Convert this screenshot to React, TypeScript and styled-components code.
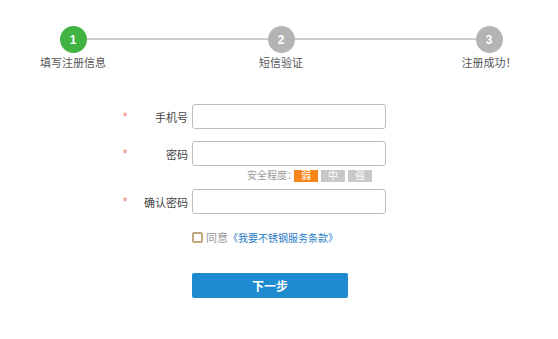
import styled, { createGlobalStyle } from 'styled-components';

const GlobalStyle = createGlobalStyle`
  body {
    margin: 0;
    background: #fff;
    font-family: "Liberation Sans", "Noto Sans CJK SC", sans-serif;
    text-spacing-trim: space-all;
  }
`;

type StepProps = {
  num: number;
  title: string;
  active?: boolean;
};

const steps: StepProps[] = [
  { num: 1, title: '填写注册信息', active: true },
  { num: 2, title: '短信验证' },
  { num: 3, title: '注册成功！' },
];

const fields = [
  { label: '手机号', type: 'text', strength: false },
  { label: '密码', type: 'password', strength: true },
  { label: '确认密码', type: 'password', strength: false },
];

const levels = ['弱', '中', '强'];

const App = () => {
  return (
    <Page>
      <GlobalStyle />
      <Stepper>
        {steps.map(step => (
          <Step key={step.num}>
            <StepCircle active={step.active}>{step.num}</StepCircle>
            <StepTitle>{step.title}</StepTitle>
          </Step>
        ))}
      </Stepper>
      <Form>
        {fields.map(field => (
          <FieldBlock key={field.label}>
            <FieldRow>
              <Required>*</Required>
              <FieldLabel>{field.label}</FieldLabel>
              <FieldInput type={field.type} />
            </FieldRow>
            {field.strength && (
              <StrengthRow>
                <StrengthLabel>安全程度：</StrengthLabel>
                {levels.map((level, i) => (
                  <StrengthBox key={level} on={i === 0}>{level}</StrengthBox>
                ))}
              </StrengthRow>
            )}
          </FieldBlock>
        ))}
        <AgreeRow>
          <CheckBox />
          <AgreeText>同意</AgreeText>
          <AgreeLink>《我要不锈钢服务条款》</AgreeLink>
        </AgreeRow>
        <SubmitRow>
          <NextButton>下一步</NextButton>
        </SubmitRow>
      </Form>
    </Page>
  );
};

export default App;

const Page = styled.div`
  width: 558px;
  height: 339px;
  padding-top: 26px;
  box-sizing: border-box;
`;

const Stepper = styled.div`
  position: relative;
  display: flex;
  justify-content: space-between;
  margin: 0 29px 0 33px;

  &::before {
    content: '';
    position: absolute;
    left: 40px;
    right: 40px;
    top: 12px;
    height: 2px;
    background: #cdcdcd;
  }
`;

const Step = styled.div`
  position: relative;
  display: flex;
  flex-direction: column;
  align-items: center;
  width: 80px;
`;

const StepCircle = styled.div<{ active?: boolean }>`
  width: 27px;
  height: 27px;
  border-radius: 50%;
  background: ${p => (p.active ? '#41b343' : '#b4b4b4')};
  color: #fff;
  font-size: 12px;
  font-weight: 700;
  display: flex;
  align-items: center;
  justify-content: center;
`;

const StepTitle = styled.div`
  margin-top: 2px;
  font-family: "Noto Sans CJK SC", sans-serif;
  font-size: 11px;
  line-height: 14px;
  color: #555;
  white-space: nowrap;
`;

const Form = styled.div`
  margin-top: 35px;
  display: flex;
  flex-direction: column;
`;

const FieldBlock = styled.div`
  display: flex;
  flex-direction: column;
  margin-bottom: 12px;
`;

const FieldRow = styled.div`
  display: flex;
  align-items: center;
  padding-left: 120px;
`;

const Required = styled.span`
  width: 10px;
  color: #ef8080;
  font-size: 12px;
  text-align: center;
`;

const FieldLabel = styled.span`
  width: 58px;
  text-align: right;
  font-size: 11px;
  color: #444;
  margin-right: 4px;
`;

const FieldInput = styled.input`
  width: 194px;
  height: 25px;
  box-sizing: border-box;
  border: 1px solid #bdbdbd;
  border-radius: 3px;
  outline: none;
  padding: 0 6px;
`;

const StrengthRow = styled.div`
  display: flex;
  align-items: center;
  height: 12px;
  padding-left: 247px;
  margin-top: 4px;
  margin-bottom: -5px;
  gap: 3px;
`;

const StrengthLabel = styled.span`
  font-size: 10px;
  line-height: 12px;
  color: #999;
  margin-right: -6px;
`;

const StrengthBox = styled.span<{ on?: boolean }>`
  width: 24px;
  height: 12px;
  line-height: 12px;
  text-align: center;
  font-size: 10px;
  color: #fff;
  background: ${p => (p.on ? '#f7861a' : '#c8c8c8')};
`;

const AgreeRow = styled.div`
  display: flex;
  align-items: center;
  height: 16px;
  padding-left: 192px;
  margin-top: 3px;
`;

const CheckBox = styled.span`
  width: 11px;
  height: 11px;
  box-sizing: border-box;
  border: 2px solid #c1a87c;
  border-radius: 2px;
  margin-right: 3px;
`;

const AgreeText = styled.span`
  font-size: 11px;
  color: #999;
`;

const AgreeLink = styled.a`
  font-size: 10px;
  color: #2a7cc8;
  cursor: pointer;
`;

const SubmitRow = styled.div`
  padding-left: 192px;
  margin-top: 28px;
`;

const NextButton = styled.button`
  width: 156px;
  height: 25px;
  border: none;
  border-radius: 2px;
  background: #1e8bd0;
  color: #fff;
  font-size: 12px;
  font-weight: 700;
  font-family: inherit;
  cursor: pointer;
`;
